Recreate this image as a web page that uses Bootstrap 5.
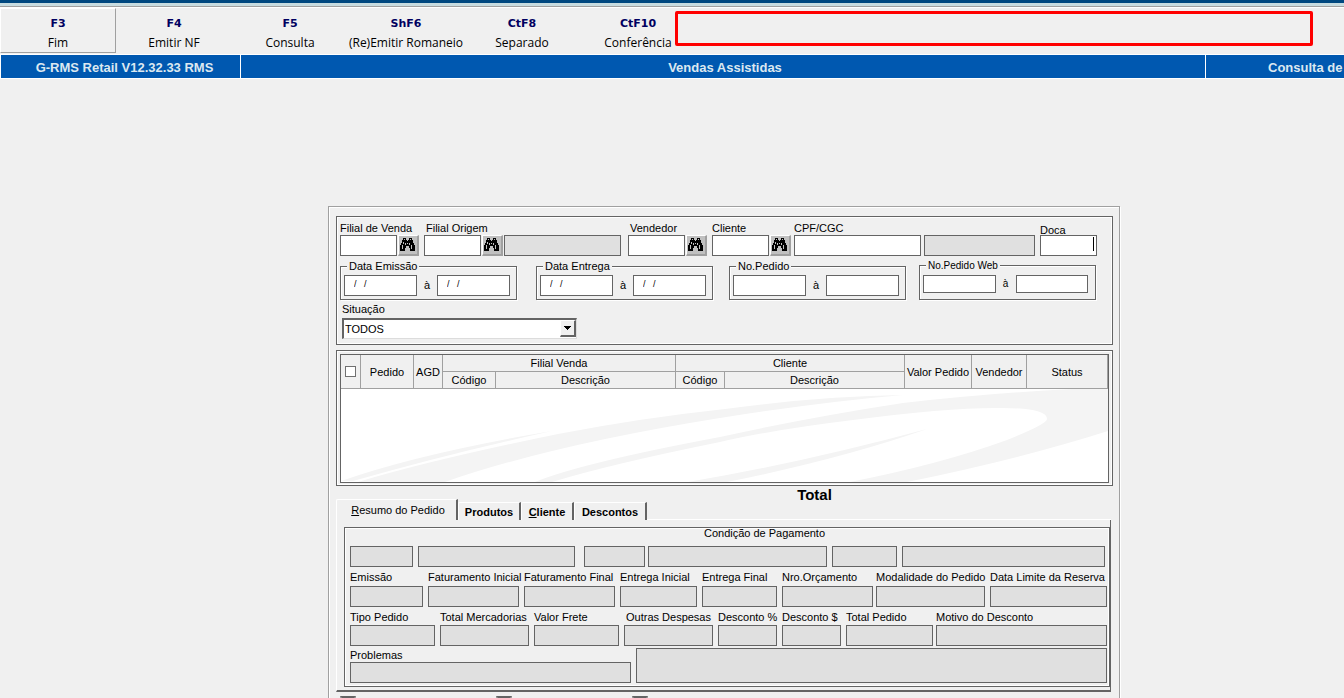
<!DOCTYPE html>
<html lang="pt-BR">
<head>
<meta charset="utf-8">
<meta name="viewport" content="width=device-width, initial-scale=1">
<title>Vendas Assistidas</title>
<link href="https://cdn.jsdelivr.net/npm/bootstrap@5.3.0/dist/css/bootstrap.min.css" rel="stylesheet">
<style>
:root { --face:#f0f0f0; --line:#646464; --soft:#a0a0a0; --off:#e0e0e0; --bar:#0058b0; }
body { background:var(--face); color:#000; font:11px/13px "Liberation Sans", Arial, sans-serif; height:100vh; overflow:hidden; }
label { display:block; white-space:nowrap; height:13px; }
/* toolbar */
.topstrip { height:8px; background:linear-gradient(#004880 3px,#c8dce0 3px 6px,#a0a0a0 6px 7px,#fff 7px); }
.tools { height:46px; }
.tool { width:116px; height:45px; flex:none; border:0; padding:5px 0 0; background:transparent; color:#000; font:12px/16px "Open Sans","Noto Sans",sans-serif; white-space:nowrap; }
.tool b { display:block; font:bold 11px/15px "DejaVu Sans",Verdana,sans-serif; color:#000060; margin-bottom:4px; }
.tool.raised { border:1px solid; border-color:#fff #a0a0a0 #a0a0a0 #fff; }
.alertbox { left:675px; right:31px; top:3px; height:35px; border:3px solid #f00; border-radius:2px; }
.titles { height:25px; background:var(--bar); border:solid #fff; border-width:1px 0; color:#dce8f0; font:bold 13px/25px "Liberation Sans",Arial,sans-serif; text-align:center; white-space:nowrap; }
.titles > * { font:inherit; margin:0; border-left:1px solid #fff; }
.t-side { flex:0 0 240px; padding-left:8px; }
.t-main { flex:1 1 0; padding-left:4px; }
.t-end { flex:0 0 139px; padding-left:62px; text-align:left; overflow:hidden; }
/* main window */
.stage { padding:127px 0 0 104px; }
.sheet { width:100%; max-width:792px; border:1px solid var(--soft); box-shadow:inset 1px 1px #fff,1px 1px #fff; padding:9px 6px 24px 7px; }
.etched { border:1px solid var(--line); box-shadow:inset 1px 1px #fff,inset -1px -1px #fff; }
.tracks { display:grid; align-items:end; }
.tracks > :nth-child(1){grid-column:1} .tracks > :nth-child(2){grid-column:3} .tracks > :nth-child(3){grid-column:5} .tracks > :nth-child(4){grid-column:7}
.tracks > :nth-child(5){grid-column:9} .tracks > :nth-child(6){grid-column:11} .tracks > :nth-child(7){grid-column:13} .tracks > :nth-child(8){grid-column:15}
.tracks > * { min-width:0; grid-row:1; }
.cols-search { grid-template-columns:79fr 5fr 79fr 1fr 117fr 7fr 79fr 5fr 79fr 3fr 127fr 3fr 111fr 5fr 57fr; }
.cols-range { grid-template-columns:177fr 19fr 177fr 16fr 177fr 13fr 177fr 1fr; }
.cols-pay { grid-template-columns:63fr 5fr 157fr 9fr 61fr 3fr 179fr 5fr 65fr 5fr 203fr; margin-right:2px; }
.cols-dates { grid-template-columns:73fr 5fr 91fr 5fr 91fr 5fr 77fr 5fr 75fr 5fr 91fr 3fr 109fr 5fr 117fr; }
.cols-values { grid-template-columns:85fr 5fr 89fr 5fr 85fr 5fr 89fr 5fr 59fr 5fr 59fr 5fr 87fr 3fr 171fr; }
.cols-notes { grid-template-columns:281fr 5fr 471fr; }
.box { display:block; width:100%; min-width:0; height:21px; border:1px solid var(--line); border-radius:0; background:#fff; padding:0 3px; font:inherit; outline:0; }
.box.off { background:var(--off); }
.finder { flex:0 0 21px; height:21px; margin-left:1px; padding:0; background:#c0c0c0; border:solid; border-width:1px 2px 2px 1px; border-color:#fff var(--soft) var(--soft) #fff; line-height:0; text-align:left; }
.finder svg { width:17px; height:17px; }
.filters { height:129px; padding:5px 15px 0 3px; }
.indent { padding-left:2px; }
.doca { margin-bottom:-2px; }
.caret { background:#fff linear-gradient(#000,#000) no-repeat right 2px top 1px/1px 14px; }
.range { border:1px solid var(--line); box-shadow:inset 1px 1px #fff,1px 1px #fff; padding:2px 6px 3px 3px; min-width:0; }
.range legend { float:none; width:auto; margin:0 0 0 3px; padding:0 2px; font-size:11px; line-height:13px; background:var(--face); }
.range .box { flex:1 1 0; }
.range .box.date { font-size:9px; padding:0 0 4px 9px; }
.range .box.date { white-space:pre; }
.range span { flex:0 0 20px; text-align:center; padding-top:4px; }
.range.web { padding:4px 7px 6px 3px; }
.range.web legend { font-size:10px; line-height:11px; }
.range.web .box { height:18px; }
.range.web span { font-size:10px; padding-top:2px; }
.status { margin:3px 0 0 2px; }
.status label { margin-bottom:2px; }
.pick { width:235px; height:21px; appearance:none; border:solid; border-width:2px 1px 1px 2px; border-color:var(--line) #dcdcdc #dcdcdc var(--line); border-radius:0; background:#fff; font:inherit; padding:0 1px; }
.pickbtn { right:1px; top:2px; width:16px; height:17px; background:var(--face); border:solid; border-width:1px 2px 2px 1px; border-color:#fff var(--line) var(--line) #fff; pointer-events:none; line-height:0; }
/* order grid */
.gridbox { margin-top:5px; padding:3px; height:136px; }
.orders { width:100%; table-layout:fixed; border-collapse:separate; border-spacing:0; border:1px solid var(--line); background:#fff; }
.orders th { background:var(--face); font-weight:400; text-align:center; padding:0; height:17px; line-height:16px; border:solid var(--soft); border-width:0 1px 1px 0; white-space:nowrap; }
.orders td { padding:0; height:93px; line-height:0; }
.orders td svg { width:100%; height:93px; display:block; }
.c-tick { width:20px; } .c-code { width:53px; } .c-agd { width:29px; } .c-cli { width:49px; } .c-val { width:67px; } .c-ven { width:55px; } .c-sta { width:81px; }
.tick { appearance:none; width:11px; height:11px; border:1px solid #707070; background:#fff; margin:auto; display:block; }
.sum { font:bold 15px/17px "Liberation Sans",Arial,sans-serif; height:13px; padding-left:180px; text-align:center; }
/* tabs */
.tabrow { height:21px; }
.tabbtn { border:0; border-top:1px solid #fff; border-left:1px solid #fff; border-right:2px solid var(--line); border-radius:2px 0 0 0; background:var(--face); padding:1px 0 0; font:bold 11px/13px "Liberation Sans",Arial,sans-serif; height:18px; width:63px; flex:none; }
.tabbtn.on { width:122px; height:21px; font-weight:400; padding:0 0 0 3px; }
.tab-s { width:53px; }
.tab-l { width:73px; }
.tabfill { flex:1; margin-right:2px; }
.tabline { border-bottom:1px solid #fff; flex:1; }
.pane { border-left:1px solid #fff; border-bottom:2px solid var(--line); border-right:1px solid var(--line); margin-right:2px; padding:7px 0 3px 7px; }
.resume { padding:0 2px 3px 5px; }
.caption { text-align:center; line-height:11px; height:18px; padding-left:72px; }
.resume label { margin-bottom:2px; }
.cols-values label { margin-bottom:1px; }
.cols-notes { margin-top:2px; }
.cols-notes label { margin-bottom:0; }
.notes { height:35px; resize:none; }
.legendrow { height:0; }
.swatch { width:16px; height:16px; flex:none; border:2px solid var(--soft); border-top-color:var(--line); }
.red { background:#f00; margin-right:140px; }
.blue { background:#00f; margin-right:120px; }
.green { background:#008000; }
</style>
</head>
<body>
<header>
  <div class="topstrip"></div>
  <div class="tools d-flex position-relative">
    <button class="tool raised"><b>F3</b>Fim</button>
    <button class="tool"><b>F4</b>Emitir NF</button>
    <button class="tool"><b>F5</b>Consulta</button>
    <button class="tool"><b>ShF6</b>(Re)Emitir Romaneio</button>
    <button class="tool"><b>CtF8</b>Separado</button>
    <button class="tool"><b>CtF10</b>Conferência</button>
    <div class="alertbox position-absolute"></div>
  </div>
  <div class="titles d-flex">
    <span class="t-side">G-RMS Retail V12.32.33 RMS</span>
    <h1 class="t-main">Vendas Assistidas</h1>
    <span class="t-end">Consulta de</span>
  </div>
</header>

<svg class="d-none">
  <symbol id="bino" viewBox="0 0 17 17" shape-rendering="crispEdges">
    <path d="M4 1h3v2h1v1h1V3h1V1h3v2h1v3h1v2h1v6h-5v-3h-1v-2H7v2H6v3H1V8h1V6h1V3h1z"/>
    <path fill="#c0c0c0" d="M5 2h1v1H5zM11 2h1v1h-1zM4 5h1v2H4zM3 8h1v4H3zM6 6h1v2H6zM10 6h1v2h-1zM12 8h1v4h-1zM8 6h1v1H8z"/>
  </symbol>
</svg>

<main class="stage d-flex justify-content-center">
<div class="sheet">
  <section class="filters etched">
    <div class="tracks cols-search">
      <div><label for="fv">Filial de Venda</label><div class="d-flex"><input id="fv" class="box"><button class="finder" aria-label="Buscar filial de venda"><svg><use href="#bino"/></svg></button></div></div>
      <div><label for="fo" class="indent">Filial Origem</label><div class="d-flex"><input id="fo" class="box"><button class="finder" aria-label="Buscar filial de origem"><svg><use href="#bino"/></svg></button></div></div>
      <input class="box off" aria-label="Nome da filial" readonly>
      <div><label for="ve" class="indent">Vendedor</label><div class="d-flex"><input id="ve" class="box"><button class="finder" aria-label="Buscar vendedor"><svg><use href="#bino"/></svg></button></div></div>
      <div><label for="cl">Cliente</label><div class="d-flex"><input id="cl" class="box"><button class="finder" aria-label="Buscar cliente"><svg><use href="#bino"/></svg></button></div></div>
      <div><label for="cpf">CPF/CGC</label><input id="cpf" class="box"></div>
      <input class="box off" aria-label="Nome do cliente" readonly>
      <div><label for="doca" class="doca">Doca</label><input id="doca" class="box caret"></div>
    </div>
    <div class="tracks cols-range mt-1">
      <fieldset class="range"><legend>Data Emissão</legend><div class="d-flex"><input class="box date" value="/   /" aria-label="Emissão de"><span>à</span><input class="box date" value="/   /" aria-label="Emissão até"></div></fieldset>
      <fieldset class="range"><legend>Data Entrega</legend><div class="d-flex"><input class="box date" value="/   /" aria-label="Entrega de"><span>à</span><input class="box date" value="/   /" aria-label="Entrega até"></div></fieldset>
      <fieldset class="range"><legend>No.Pedido</legend><div class="d-flex"><input class="box" aria-label="Pedido de"><span>à</span><input class="box" aria-label="Pedido até"></div></fieldset>
      <fieldset class="range web"><legend>No.Pedido Web</legend><div class="d-flex"><input class="box" aria-label="Pedido web de"><span>à</span><input class="box" aria-label="Pedido web até"></div></fieldset>
    </div>
    <div class="status d-inline-block">
      <label for="sit">Situação</label>
      <div class="position-relative">
        <select id="sit" class="pick d-block"><option>TODOS</option></select>
        <span class="pickbtn position-absolute"><svg width="13" height="14" shape-rendering="crispEdges"><path d="M3 5h7v1H9v1H8v1H7v1H6V8H5V7H4V6H3z"/></svg></span>
      </div>
    </div>
  </section>

  <section class="gridbox etched">
    <table class="orders">
      <colgroup><col class="c-tick"><col class="c-code"><col class="c-agd"><col class="c-code"><col><col class="c-cli"><col><col class="c-val"><col class="c-ven"><col class="c-sta"></colgroup>
      <thead>
        <tr><th rowspan="2"><input type="checkbox" class="tick" aria-label="Marcar todos"></th><th rowspan="2">Pedido</th><th rowspan="2">AGD</th><th colspan="2">Filial Venda</th><th colspan="2">Cliente</th><th rowspan="2">Valor Pedido</th><th rowspan="2">Vendedor</th><th rowspan="2">Status</th></tr>
        <tr><th>Código</th><th>Descrição</th><th>Código</th><th>Descrição</th></tr>
      </thead>
      <tbody><tr><td colspan="10">
        <svg viewBox="0 0 767 93" preserveAspectRatio="none" fill="#f4f4f4">
          <path d="M0 92Q80 64 211 42Q110 64 12 92z"/>
          <path d="M17 93Q90 71 217 45Q300 29 384 20Q480 7 562 6Q480 13 379 29Q210 56 104 93z"/>
          <path d="M194 93Q240 74 379 48Q470 28 562 14Q650 4 732 0H767V42Q679 70 566 93H509Q600 75 666 51Q706 35 706 30Q706 19 662 19Q610 18 512 31Q430 41 379 53Q270 75 211 93z"/>
          <path d="M347 93Q460 74 586 40Q500 70 386 93z"/>
        </svg></td></tr></tbody>
    </table>
  </section>

  <div class="sum">Total</div>
  <nav class="tabrow d-flex align-items-end">
    <button class="tabbtn on"><u>R</u>esumo do Pedido</button>
    <div class="tabfill d-flex">
      <button class="tabbtn">Produtos</button>
      <button class="tabbtn tab-s"><u>C</u>liente</button>
      <button class="tabbtn tab-l">Descontos</button>
      <div class="tabline"></div>
    </div>
  </nav>
  <section class="pane">
    <div class="resume etched">
      <div class="caption">Condição de Pagamento</div>
      <div class="tracks cols-pay">
        <input class="box off" aria-label="Código da condição" readonly><input class="box off" aria-label="Condição" readonly><input class="box off" aria-label="Código da forma" readonly><input class="box off" aria-label="Forma" readonly><input class="box off" aria-label="Código do plano" readonly><input class="box off" aria-label="Plano" readonly>
      </div>
      <div class="tracks cols-dates mt-1">
        <div><label for="d1">Emissão</label><input id="d1" class="box off" readonly></div>
        <div><label for="d2">Faturamento Inicial</label><input id="d2" class="box off" readonly></div>
        <div><label for="d3">Faturamento Final</label><input id="d3" class="box off" readonly></div>
        <div><label for="d4">Entrega Inicial</label><input id="d4" class="box off" readonly></div>
        <div><label for="d5">Entrega Final</label><input id="d5" class="box off" readonly></div>
        <div><label for="d6">Nro.Orçamento</label><input id="d6" class="box off" readonly></div>
        <div><label for="d7">Modalidade do Pedido</label><input id="d7" class="box off" readonly></div>
        <div><label for="d8">Data Limite da Reserva</label><input id="d8" class="box off" readonly></div>
      </div>
      <div class="tracks cols-values mt-1">
        <div><label for="v1">Tipo Pedido</label><input id="v1" class="box off" readonly></div>
        <div><label for="v2">Total Mercadorias</label><input id="v2" class="box off" readonly></div>
        <div><label for="v3">Valor Frete</label><input id="v3" class="box off" readonly></div>
        <div><label for="v4" class="indent">Outras Despesas</label><input id="v4" class="box off" readonly></div>
        <div><label for="v5">Desconto %</label><input id="v5" class="box off" readonly></div>
        <div><label for="v6">Desconto $</label><input id="v6" class="box off" readonly></div>
        <div><label for="v7">Total Pedido</label><input id="v7" class="box off" readonly></div>
        <div><label for="v8">Motivo do Desconto</label><input id="v8" class="box off" readonly></div>
      </div>
      <div class="tracks cols-notes">
        <div><label for="pr">Problemas</label><input id="pr" class="box off" readonly></div>
        <textarea class="box off notes" aria-label="Detalhes" readonly></textarea>
      </div>
    </div>
  </section>
  <div class="legendrow d-flex ps-1 pt-1">
    <span class="swatch red"></span>
    <span class="swatch blue"></span>
    <span class="swatch green"></span>
  </div>
</div>
</main>
<script src="https://cdn.jsdelivr.net/npm/bootstrap@5.3.0/dist/js/bootstrap.bundle.min.js"></script>
</body>
</html>
